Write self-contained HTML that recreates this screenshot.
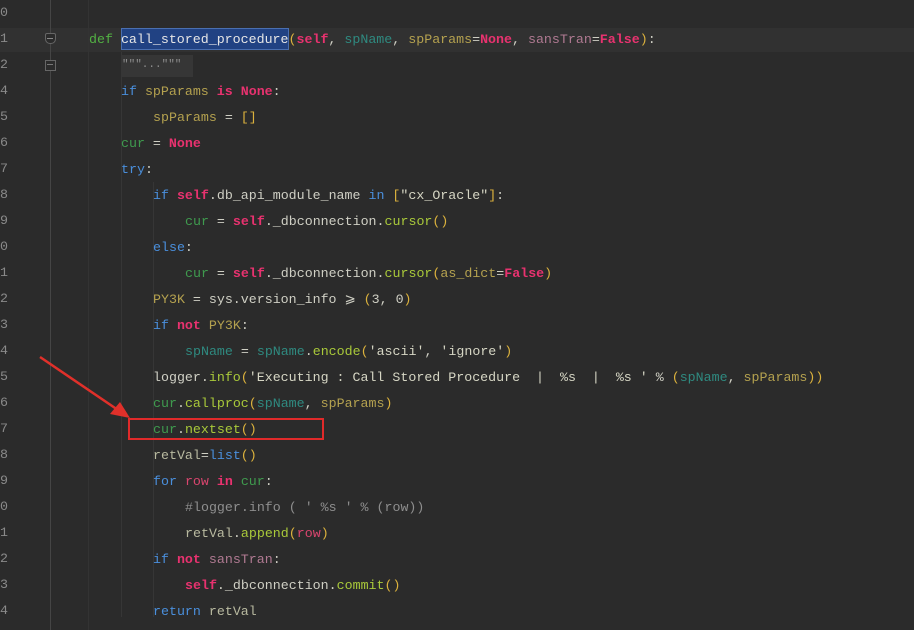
<!DOCTYPE html>
<html><head><meta charset="utf-8"><style>
html,body{margin:0;padding:0;}
body{width:914px;height:630px;background:#2b2b2b;position:relative;overflow:hidden;font-family:"Liberation Mono",monospace;font-size:13.3px;color:#cfcfc4;}
.ln{position:absolute;left:0px;color:#8a8a8a;font-size:13.3px;}
.l{position:absolute;white-space:pre;line-height:20px;}
.k{color:#4a8fdc}.p{color:#e8326f;font-weight:bold}.d{color:#52b043}.c{color:#3f9a4e}
.sp{color:#b4a14f}.sn{color:#2f8a80}.f{color:#a9c93a}.b{color:#dcb23d}.rv{color:#b9baa0}
.st{color:#b07a92}.cm{color:#8e8e8e}.s{color:#d6d6c4}.row{color:#d8456e}
.vl{position:absolute;top:0;height:630px;width:1px;}
</style></head><body>
<div style="position:absolute;left:0;top:28px;width:914px;height:24px;background:#313131"></div>
<div class="vl" style="left:50px;background:#454545"></div>
<div class="vl" style="left:88px;background:#333"></div>
<div class="vl" style="left:121px;top:52px;height:565px;background:#363636"></div>
<div class="vl" style="left:153px;top:182px;height:435px;background:#363636"></div>
<div style="position:absolute;left:45px;top:33px;width:9px;height:9px;border:1px solid #666;border-radius:2px 2px 5px 5px;background:#2b2b2b"></div>
<div style="position:absolute;left:47px;top:38px;width:6px;height:1px;background:#888"></div>
<div style="position:absolute;left:45px;top:60px;width:9px;height:9px;border:1px solid #666;background:#2b2b2b"></div>
<div style="position:absolute;left:47px;top:64px;width:6px;height:1px;background:#777"></div>

<div class="ln" style="top:5px">0</div><div class="ln" style="top:31px">1</div><div class="ln" style="top:57px">2</div>
<div class="ln" style="top:83px">4</div><div class="ln" style="top:109px">5</div><div class="ln" style="top:135px">6</div>
<div class="ln" style="top:161px">7</div><div class="ln" style="top:187px">8</div><div class="ln" style="top:213px">9</div>
<div class="ln" style="top:239px">0</div><div class="ln" style="top:265px">1</div><div class="ln" style="top:291px">2</div>
<div class="ln" style="top:317px">3</div><div class="ln" style="top:343px">4</div><div class="ln" style="top:369px">5</div>
<div class="ln" style="top:395px">6</div><div class="ln" style="top:421px">7</div><div class="ln" style="top:447px">8</div>
<div class="ln" style="top:473px">9</div><div class="ln" style="top:499px">0</div><div class="ln" style="top:525px">1</div>
<div class="ln" style="top:551px">2</div><div class="ln" style="top:577px">3</div><div class="ln" style="top:603px">4</div>

<div style="position:absolute;left:121px;top:28px;width:168px;height:22px;background:#214283;border:1px solid #4a6fb0;box-sizing:border-box"></div>
<div style="position:absolute;left:121px;top:55px;width:72px;height:22px;background:#363636"></div>

<div class="l" style="left:89px;top:30px"><span class="d">def</span> <span style="color:#e6e6e6">call_stored_procedure</span><span class="b">(</span><span class="p">self</span>, <span class="sn">spName</span>, <span class="sp">spParams</span>=<span class="p">None</span>, <span class="st">sansTran</span>=<span class="p">False</span><span class="b">)</span>:</div>
<div class="l cm" style="left:122px;top:55px;font-size:11px">"""...""" </div>
<div class="l" style="left:121px;top:82px"><span class="k">if</span> <span class="sp">spParams</span> <span class="p">is</span> <span class="p">None</span>:</div>
<div class="l" style="left:153px;top:108px"><span class="sp">spParams</span> = <span class="b">[]</span></div>
<div class="l" style="left:121px;top:134px"><span class="c">cur</span> = <span class="p">None</span></div>
<div class="l" style="left:121px;top:160px"><span class="k">try</span>:</div>
<div class="l" style="left:153px;top:186px"><span class="k">if</span> <span class="p">self</span>.db_api_module_name <span class="k">in</span> <span class="b">[</span><span class="s">"cx_Oracle"</span><span class="b">]</span>:</div>
<div class="l" style="left:185px;top:212px"><span class="c">cur</span> = <span class="p">self</span>._dbconnection.<span class="f">cursor</span><span class="b">()</span></div>
<div class="l" style="left:153px;top:238px"><span class="k">else</span>:</div>
<div class="l" style="left:185px;top:264px"><span class="c">cur</span> = <span class="p">self</span>._dbconnection.<span class="f">cursor</span><span class="b">(</span><span class="sp">as_dict</span>=<span class="p">False</span><span class="b">)</span></div>
<div class="l" style="left:153px;top:290px"><span class="sp">PY3K</span> = sys.version_info ⩾ <span class="b">(</span>3, 0<span class="b">)</span></div>
<div class="l" style="left:153px;top:316px"><span class="k">if</span> <span class="p">not</span> <span class="sp">PY3K</span>:</div>
<div class="l" style="left:185px;top:342px"><span class="sn">spName</span> = <span class="sn">spName</span>.<span class="f">encode</span><span class="b">(</span><span class="s">'ascii'</span>, <span class="s">'ignore'</span><span class="b">)</span></div>
<div class="l" style="left:153px;top:368px">logger.<span class="f">info</span><span class="b">(</span><span class="s">'Executing : Call Stored Procedure  |  %s  |  %s '</span> % <span class="b">(</span><span class="sn">spName</span>, <span class="sp">spParams</span><span class="b">))</span></div>
<div class="l" style="left:153px;top:394px"><span class="c">cur</span>.<span class="f">callproc</span><span class="b">(</span><span class="sn">spName</span>, <span class="sp">spParams</span><span class="b">)</span></div>
<div class="l" style="left:153px;top:420px"><span class="c">cur</span>.<span class="f">nextset</span><span class="b">()</span></div>
<div class="l" style="left:153px;top:446px"><span class="rv">retVal</span>=<span class="k">list</span><span class="b">()</span></div>
<div class="l" style="left:153px;top:472px"><span class="k">for</span> <span class="row">row</span> <span class="p">in</span> <span class="c">cur</span>:</div>
<div class="l cm" style="left:185px;top:498px">#logger.info ( ' %s ' % (row))</div>
<div class="l" style="left:185px;top:524px"><span class="rv">retVal</span>.<span class="f">append</span><span class="b">(</span><span class="row">row</span><span class="b">)</span></div>
<div class="l" style="left:153px;top:550px"><span class="k">if</span> <span class="p">not</span> <span class="st">sansTran</span>:</div>
<div class="l" style="left:185px;top:576px"><span class="p">self</span>._dbconnection.<span class="f">commit</span><span class="b">()</span></div>
<div class="l" style="left:153px;top:602px"><span class="k">return</span> <span class="rv">retVal</span></div>

<div style="position:absolute;left:128px;top:418px;width:196px;height:22px;border:2px solid #e02a2a;box-sizing:border-box"></div>
<svg style="position:absolute;left:0;top:0" width="914" height="630">
<line x1="40" y1="357" x2="118" y2="410" stroke="#e0302a" stroke-width="2.5"/>
<polygon points="130,418 110,414 120,402" fill="#e0302a"/>
</svg>
</body></html>
